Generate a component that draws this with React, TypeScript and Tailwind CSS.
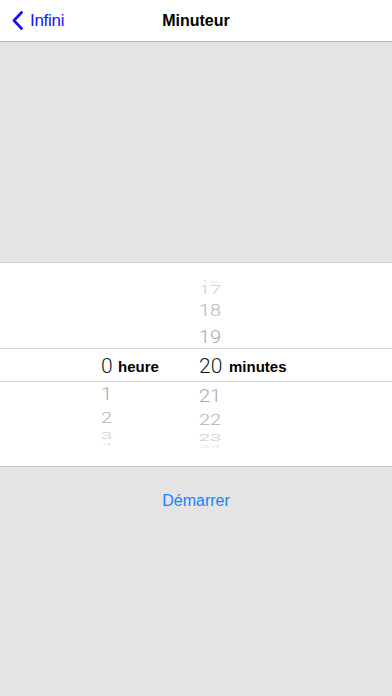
const rowsAbove = [
  { h: "16", m: "16", hidden: true, cls: "h-[9px]", txt: "scale-y-[0.2] text-[#e2e2e2]" },
  { h: "17", m: "17", hidden: true, cls: "h-[8px]", txt: "scale-y-[0.6] text-[#cdcdcd]" },
  { h: "18", m: "18", hidden: true, cls: "h-[32px]", txt: "scale-y-[0.82] text-[#b6b6b6]" },
  { h: "19", m: "19", hidden: true, cls: "h-[19px]", txt: "scale-y-[0.93] text-[#a8a8a8]" },
];

const rowsBelow = [
  { h: "1", m: "21", hidden: false, cls: "h-[26px]", txt: "scale-y-[0.95] text-[#a8a8a8]" },
  { h: "2", m: "22", hidden: false, cls: "h-[24px]", txt: "scale-y-[0.75] text-[#b2b2b2]" },
  { h: "3", m: "23", hidden: false, cls: "h-[12px]", txt: "scale-y-[0.48] text-[#c8c8c8]" },
  { h: "4", m: "24", hidden: false, cls: "h-[6px]", txt: "scale-y-[0.15] text-[#e0e0e0]" },
];

type Row = { h: string; m: string; hidden: boolean; cls: string; txt: string };

const PickerRow = ({ row }: { row: Row }) => {
  return (
    <div className={`flex items-center pl-[101px] overflow-visible ${row.cls}`}>
      <div className="w-[98px]">
        {!row.hidden && (
          <span className={`inline-block leading-none text-[20px] font-light ${row.txt}`}>{row.h}</span>
        )}
      </div>
      <span className={`inline-block leading-none text-[20px] font-light ${row.txt}`}>{row.m}</span>
    </div>
  );
};

export default function App() {
  return (
    <div className="w-[392px] h-[696px] bg-[#e4e4e4] flex flex-col" style={{ fontFamily: "'Liberation Sans', Arial, sans-serif" }}>
      {/* nav */}
      <div className="h-[42px] shrink-0 bg-white border-b border-[#b4b4b4] flex items-center relative">
        <div className="flex items-center pl-[12px] text-[#1515f5]">
          <svg width="11" height="19" viewBox="0 0 11 19" className="mb-[1px]">
            <polyline points="9.5,1.5 2,9.5 9.5,17.5" fill="none" stroke="currentColor" strokeWidth="2.8" strokeLinecap="round" strokeLinejoin="round" />
          </svg>
          <span className="ml-[7px] text-[17px] tracking-[-0.3px]">Infini</span>
        </div>
        <div className="absolute left-0 right-0 text-center text-[16px] font-bold text-black pointer-events-none">Minuteur</div>
      </div>

      {/* empty gray area */}
      <div className="h-[221px] shrink-0 border-b border-[#cfcfcf]" />

      {/* picker */}
      <div className="h-[204px] shrink-0 bg-white border-b border-[#c2c2c2] flex flex-col overflow-hidden" style={{ fontFamily: "Roboto, 'Liberation Sans', sans-serif" }}>
        <div className="h-[14px]" />
        {rowsAbove.map((r) => (
          <PickerRow key={r.m} row={r} />
        ))}
        <div className="h-[3px]" />
        <div className="h-[34px] border-y border-[#d6d6d6] flex items-center pl-[101px] pt-[2px]">
          <div className="w-[98px] flex items-center">
            <span className="w-[17px] text-[21px] font-light leading-none text-[#1a1a1a]">0</span>
            <span className="text-[15px] font-bold text-black leading-none" style={{ fontFamily: "'Liberation Sans', Arial, sans-serif" }}>heure</span>
          </div>
          <span className="w-[30px] text-[21px] font-light leading-none text-[#1a1a1a]">20</span>
          <span className="text-[15px] font-bold text-black leading-none" style={{ fontFamily: "'Liberation Sans', Arial, sans-serif" }}>minutes</span>
        </div>
        {rowsBelow.map((r) => (
          <PickerRow key={r.m} row={r} />
        ))}
      </div>

      {/* start button */}
      <div className="pt-[24px] flex justify-center">
        <span className="text-[16px] leading-[20px] text-[#1a80fb]">Démarrer</span>
      </div>
    </div>
  );
}
